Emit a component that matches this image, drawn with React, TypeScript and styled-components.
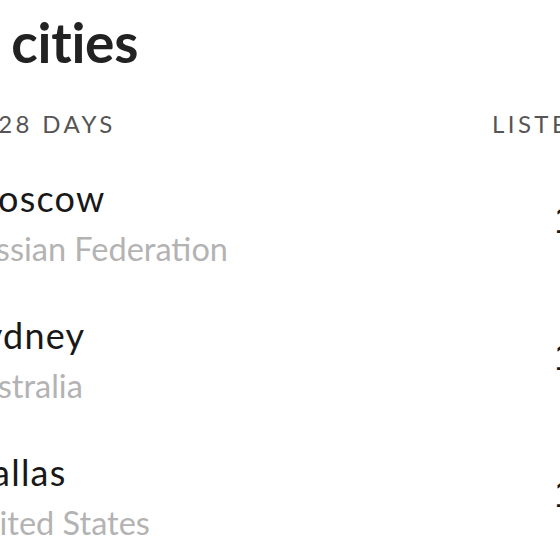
import React from "react";
import styled, { createGlobalStyle } from "styled-components";

const Global = createGlobalStyle`
  html, body { margin: 0; padding: 0; background: #ffffff; }
  body { font-family: "Lato", "Noto Sans", sans-serif; -webkit-font-smoothing: antialiased; }
`;

const Viewport = styled.div`
  width: 560px;
  height: 560px;
  overflow: hidden;
  background: #ffffff;
`;

const Panel = styled.section`
  width: 746px;
  margin-left: -90px;
  display: flex;
  flex-direction: column;
`;

const Heading = styled.h2`
  margin: 10px 0 0 0;
  font-size: 55px;
  line-height: 64px;
  font-weight: 700;
  color: #222222;
  letter-spacing: -0.3px;
`;

const HeaderRow = styled.div`
  display: grid;
  grid-template-columns: 1fr 220px;
  margin-top: 36px;
  padding: 0 13px 0 10px;
`;

const Label = styled.span<{ $align?: "left" | "right" }>`
  font-size: 24px;
  line-height: 28px;
  letter-spacing: 3.4px;
  text-transform: uppercase;
  color: #555555;
  text-align: ${(p) => p.$align || "left"};
`;

const List = styled.ol`
  list-style: none;
  margin: 40px 0 0 0;
  padding: 0;
  display: flex;
  flex-direction: column;
  gap: 47px;
`;

const Row = styled.li`
  display: grid;
  grid-template-columns: 48px 1fr 220px;
  align-items: center;
`;

const Rank = styled.span`
  font-size: 30px;
  color: #181818;
`;

const City = styled.div`
  display: flex;
  flex-direction: column;
  gap: 12px;
`;

const CityName = styled.span`
  padding-left: 6px;
  font-size: 36px;
  line-height: 40px;
  letter-spacing: 1.2px;
  color: #181818;
`;

const Country = styled.span`
  font-size: 32.5px;
  line-height: 38px;
  color: #b3b3b3;
`;

const Count = styled.span`
  font-family: "Inter", "Lato", sans-serif;
  font-variant-numeric: tabular-nums;
  font-size: 36px;
  line-height: 44px;
  text-align: right;
  color: #181818;
  padding-bottom: 6px;
`;

const rows = [
  { rank: 1, city: "Moscow", country: "Russian Federation", count: "1,482" },
  { rank: 2, city: "Sydney", country: "Australia", count: "1,217" },
  { rank: 3, city: "Dallas", country: "United States", count: "1,104" },
];

export default function App() {
  return (
    <Viewport>
      <Global />
      <Panel>
        <Heading>Top cities</Heading>
        <HeaderRow>
          <Label>Last 28 days</Label>
          <Label $align="right">Listeners</Label>
        </HeaderRow>
        <List>
          {rows.map((r) => (
            <Row key={r.rank}>
              <Rank>{r.rank}</Rank>
              <City>
                <CityName>{r.city}</CityName>
                <Country>{r.country}</Country>
              </City>
              <Count>{r.count}</Count>
            </Row>
          ))}
        </List>
      </Panel>
    </Viewport>
  );
}
